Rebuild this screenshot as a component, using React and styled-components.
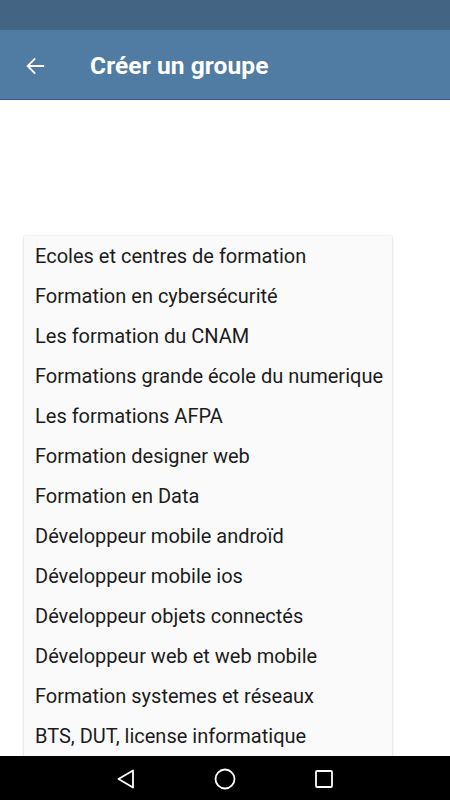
import React from "react";
import styled, { createGlobalStyle } from "styled-components";

const GlobalStyle = createGlobalStyle`
  html, body {
    margin: 0;
    padding: 0;
    background: #ffffff;
  }
  * {
    box-sizing: border-box;
  }
`;

const options = [
  "Ecoles et centres de formation",
  "Formation en cybersécurité",
  "Les formation du CNAM",
  "Formations grande école du numerique",
  "Les formations AFPA",
  "Formation designer web",
  "Formation en Data",
  "Développeur mobile androïd",
  "Développeur mobile ios",
  "Développeur objets connectés",
  "Développeur web et web mobile",
  "Formation systemes et réseaux",
  "BTS, DUT, license informatique",
];

const App = () => {
  return (
    <>
      <GlobalStyle />
      <Screen>
        <StatusBar />
        <AppBar>
          <BackButton aria-label="Retour">
            <svg width="22" height="22" viewBox="0 0 24 24">
              <path
                d="M21 12H4.5M11.5 4.5L4 12l7.5 7.5"
                fill="none"
                stroke="#fff"
                strokeWidth="2"
                strokeLinecap="square"
              />
            </svg>
          </BackButton>
          <Title>Créer un groupe</Title>
        </AppBar>
        <Content>
          <Menu>
            {options.map((option) => (
              <MenuItem key={option}>{option}</MenuItem>
            ))}
          </Menu>
        </Content>
        <NavBar>
          <svg width="22" height="24" viewBox="0 0 22 24">
            <path
              d="M18 3.5V20.5L3.5 12Z"
              fill="none"
              stroke="#fff"
              strokeWidth="1.8"
              strokeLinejoin="round"
            />
          </svg>
          <svg width="24" height="24" viewBox="0 0 24 24">
            <circle cx="12" cy="12" r="9.5" fill="none" stroke="#fff" strokeWidth="1.8" />
          </svg>
          <svg width="22" height="22" viewBox="0 0 22 22">
            <rect x="3" y="3" width="16" height="16" rx="1" fill="none" stroke="#fff" strokeWidth="1.8" />
          </svg>
        </NavBar>
      </Screen>
    </>
  );
};

const Screen = styled.div`
  width: 450px;
  height: 800px;
  display: flex;
  flex-direction: column;
  overflow: hidden;
  font-family: Roboto, "Liberation Sans", sans-serif;
  background: #ffffff;
`;

const StatusBar = styled.div`
  height: 30px;
  flex-shrink: 0;
  background: #436482;
`;

const AppBar = styled.header`
  height: 70px;
  flex-shrink: 0;
  display: flex;
  align-items: center;
  padding-top: 2px;
  background: #507ca3;
  border-bottom: 1px solid #2f5c86;
`;

const BackButton = styled.div`
  width: 90px;
  padding-left: 24px;
  display: flex;
  align-items: center;
`;

const Title = styled.h1`
  margin: 0;
  color: #ffffff;
  font-size: 24.5px;
  font-weight: 700;
  letter-spacing: 0.1px;
`;

const Content = styled.main`
  flex: 1;
  overflow: hidden;
  padding: 136px 0 0 24px;
`;

const Menu = styled.ul`
  list-style: none;
  margin: 0;
  padding: 0;
  width: 368px;
  background: #fafafa;
  box-shadow: 0 1px 3px rgba(0, 0, 0, 0.16), 0 0 1px rgba(0, 0, 0, 0.18);
`;

const MenuItem = styled.li`
  height: 40px;
  display: flex;
  align-items: center;
  padding-left: 11px;
  font-size: 20px;
  color: #1c1c1c;
  white-space: nowrap;
`;

const NavBar = styled.nav`
  height: 44px;
  flex-shrink: 0;
  background: #000000;
  display: flex;
  align-items: center;
  justify-content: center;
  gap: 76px;
  padding-top: 2px;
`;

export default App;
